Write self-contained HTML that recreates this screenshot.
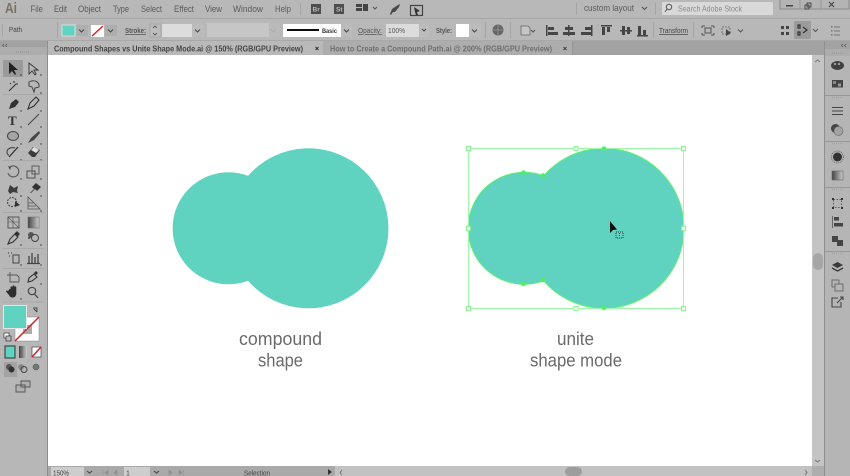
<!DOCTYPE html>
<html><head><meta charset="utf-8"><style>
html,body{margin:0;padding:0;width:850px;height:476px;overflow:hidden;background:#b8b8b8}
svg{display:block;position:absolute;left:0;top:0}
text{font-family:"Liberation Sans",sans-serif}
</style></head><body>
<svg width="850" height="476" viewBox="0 0 850 476" xmlns="http://www.w3.org/2000/svg">
<defs><filter id="b" x="-2%" y="-2%" width="104%" height="104%"><feGaussianBlur stdDeviation="0.35"/></filter>
<linearGradient id="g" x1="0" x2="1"><stop offset="0" stop-color="#444"/><stop offset="1" stop-color="#ccc"/></linearGradient></defs>
<rect width="850" height="476" fill="#b8b8b8"/>
<g filter="url(#b)">
<!-- menu bar -->
<rect x="0" y="18" width="850" height="1" fill="#a6a6a6"/>
<text x="5" y="13" font-size="15" textLength="12" lengthAdjust="spacingAndGlyphs" font-weight="bold" fill="#7c6f64">Ai</text>
<g font-size="9" fill="#5a5a5a">
<text x="30.500" y="12" textLength="12.500" lengthAdjust="spacingAndGlyphs">File</text><text x="54" y="12" textLength="13" lengthAdjust="spacingAndGlyphs">Edit</text><text x="78" y="12" textLength="23" lengthAdjust="spacingAndGlyphs">Object</text><text x="113" y="12" textLength="16" lengthAdjust="spacingAndGlyphs">Type</text><text x="141" y="12" textLength="21" lengthAdjust="spacingAndGlyphs">Select</text><text x="174" y="12" textLength="20" lengthAdjust="spacingAndGlyphs">Effect</text><text x="205" y="12" textLength="17" lengthAdjust="spacingAndGlyphs">View</text><text x="233" y="12" textLength="30" lengthAdjust="spacingAndGlyphs">Window</text><text x="275" y="12" textLength="16" lengthAdjust="spacingAndGlyphs">Help</text>
</g>
<rect x="300" y="3" width="1" height="12" fill="#a5a5a5"/>
<rect x="311" y="4" width="10" height="10" fill="#4d4d4d"/><text x="312.500" y="11.500" font-size="6.500" fill="#bbb" font-weight="bold">Br</text>
<rect x="334" y="4" width="10" height="10" fill="#4d4d4d"/><text x="336" y="11.500" font-size="6.500" fill="#bbb" font-weight="bold">St</text>
<path d="M356 4h6v3h-6zM356 8h6v3h-6zM363 4h5v7h-5z" fill="#444"/><path d="M373 7l2 2 2-2" stroke="#555" fill="none"/>
<path d="M390 14l2-5 6-4 2-1-1 3-4 5-2 0-2 3z" fill="#4a4a4a"/>
<path d="M410.500 5.500h12v10h-12z" fill="none" stroke="#444" stroke-width="1.200"/><path d="M414 7l6 4-3 1 1 3-2 0-1-3z" fill="#333"/>
<rect x="576" y="3" width="1" height="12" fill="#a5a5a5"/>
<text x="584" y="11" font-size="9" fill="#5c5c5c" textLength="50" lengthAdjust="spacingAndGlyphs">custom layout</text><path d="M642 7l2.500 2.500 2.500-2.500" stroke="#555" fill="none" stroke-width="1.100"/>
<rect x="655" y="3" width="1" height="12" fill="#a5a5a5"/>
<rect x="662" y="2" width="111" height="13" rx="1" fill="#d9d9d9"/>
<circle cx="669" cy="7" r="2.700" fill="none" stroke="#555" stroke-width="1"/><path d="M667 9l-2 3" stroke="#555" stroke-width="1"/>
<text x="678" y="11.500" font-size="8" fill="#8a8a8a" textLength="64" lengthAdjust="spacingAndGlyphs">Search Adobe Stock</text>
<path d="M780 0v9h69V0" fill="#b4b4b4" stroke="#7d7d7d" stroke-width=".8"/><path d="M800 0v9M821 0v9" stroke="#8a8a8a" stroke-width=".7"/>
<rect x="786" y="5" width="7" height="1.500" fill="#444"/><path d="M807 3h4v4h-4zM805 5h4v4h-4z" fill="none" stroke="#444" stroke-width=".9"/><path d="M829 2l5 5M834 2l-5 5" stroke="#444" stroke-width="1.200"/>

<!-- control bar -->
<rect x="0" y="40" width="850" height="1" fill="#a8a8a8"/>
<rect x="2" y="24" width="1" height="12" fill="#a5a5a5"/>
<text x="9" y="32" font-size="7.500" fill="#444" textLength="13" lengthAdjust="spacingAndGlyphs">Path</text>
<rect x="57" y="22" width="1" height="16" fill="#a5a5a5"/>
<rect x="62" y="25" width="13" height="11" fill="#5ed3bf" stroke="#eee" stroke-width=".7"/>
<rect x="76" y="25" width="12" height="11" fill="#aeaeae"/><path d="M79 29.500l2.500 2.500 2.500-2.500" stroke="#444" fill="none"/>
<rect x="91" y="25" width="13" height="12" fill="#fff"/><path d="M92 36l11-10" stroke="#d22" stroke-width="1.500"/>
<rect x="105" y="25" width="12" height="11" fill="#aeaeae"/><path d="M108 29.500l2.500 2.500 2.500-2.500" stroke="#444" fill="none"/>
<text x="125" y="33" font-size="7.500" font-weight="bold" fill="#555" text-decoration="underline" textLength="21" lengthAdjust="spacingAndGlyphs">Stroke:</text>
<rect x="150" y="24" width="11" height="13" fill="#bdbdbd" stroke="#9c9c9c" stroke-width=".6"/><path d="M153 28l2-2 2 2M153 33l2 2 2-2" stroke="#444" fill="none" stroke-width=".8"/>
<rect x="162" y="24" width="30" height="13" fill="#dcdcdc"/><rect x="192" y="24" width="12" height="13" fill="#bcbcbc"/><path d="M195 29.500l2.500 2.500 2.500-2.500" stroke="#444" fill="none"/>
<rect x="207" y="23" width="62" height="14" fill="#c6c6c6"/><rect x="269" y="23" width="11" height="14" fill="#bababa"/><path d="M271 29.500l2.500 2.500 2.500-2.500" stroke="#aaa" fill="none"/>
<rect x="283" y="24" width="58" height="13" fill="#fff"/><rect x="287" y="29" width="32" height="2" fill="#111"/>
<text x="322" y="33" font-size="6.500" fill="#333" font-weight="bold" textLength="15" lengthAdjust="spacingAndGlyphs">Basic</text>
<rect x="341" y="24" width="11" height="13" fill="#bcbcbc"/><path d="M344 29.500l2.500 2.500 2.500-2.500" stroke="#444" fill="none"/>
<text x="358" y="33" font-size="7.500" fill="#555" text-decoration="underline" textLength="24" lengthAdjust="spacingAndGlyphs">Opacity:</text>
<rect x="386" y="24" width="33" height="13" fill="#dcdcdc"/><text x="388" y="33" font-size="7" fill="#555" textLength="17" lengthAdjust="spacingAndGlyphs">100%</text>
<rect x="420" y="24" width="9" height="13" fill="#bcbcbc"/><path d="M422 29l2 2 2-2" stroke="#444" fill="none"/>
<text x="436" y="33" font-size="7.500" font-weight="bold" fill="#555" textLength="16" lengthAdjust="spacingAndGlyphs">Style:</text>
<rect x="456" y="24" width="13" height="13" fill="#fff"/><rect x="469" y="24" width="12" height="13" fill="#bcbcbc"/><path d="M472 29.500l2.500 2.500 2.500-2.500" stroke="#444" fill="none"/>
<rect x="485" y="22" width="1" height="16" fill="#a5a5a5"/>
<circle cx="498" cy="30" r="5.500" fill="#666"/><path d="M493 30h10M498 25v10" stroke="#999" stroke-width=".7"/>
<rect x="510" y="22" width="1" height="16" fill="#a5a5a5"/>
<path d="M521 26h7l2 2v7h-9z" fill="#c6c6c6" stroke="#666" stroke-width=".8"/><path d="M531 30l2 2 2-2" stroke="#555" fill="none"/>
<g fill="#454545">
<path d="M546 25h1.500v11H546zM548 27h6v3h-6zM548 32h10v3h-10z"/>
<path d="M568 25h1.500v11H568zM565 27h8v3h-8zM563 32h12v3h-12z"/>
<path d="M591 25h1.500v11H591zM585 27h6v3h-6zM581 32h10v3h-10z"/>
<path d="M601 25h11v1.500h-11zM602 27h3v8h-3zM607 27h3v5h-3z"/>
<path d="M620 30h12v1.500h-12zM622 26h3v9h-3zM627 27h3v7h-3z"/>
<path d="M637 35h11v1.500h-11zM638 26h3v9h-3zM643 30h3v5h-3z"/>
</g>
<rect x="653" y="22" width="1" height="16" fill="#a5a5a5"/>
<text x="659" y="33" font-size="7.200" fill="#444" text-decoration="underline" textLength="29" lengthAdjust="spacingAndGlyphs">Transform</text>
<rect x="693" y="22" width="1" height="16" fill="#a5a5a5"/>
<path d="M702 26h3M711 26h3M702 35h3M711 35h3M705 28h6v5h-6zM702 26v2M714 26v2M702 33v2M714 33v2" stroke="#555" fill="none"/>
<path d="M722 27h8v7h-8z" fill="none" stroke="#666" stroke-width=".8" stroke-dasharray="2 1"/><path d="M726 29l5 4-5 3z" fill="#444"/><path d="M738 29.500l2.500 2.500 2.500-2.500" stroke="#555" fill="none"/>
<path d="M781 26h3v3h-3zM786 26h3v3h-3zM781 32h3v3h-3zM786 32h3v3h-3z" fill="#444"/>
<rect x="794" y="21" width="17" height="18" rx="1" fill="#9c9c9c"/>
<path d="M798 25h2v3h-2zM798 32h2v3h-2zM803 27l4 3-4 3" fill="none" stroke="#333" stroke-width="1.200"/><path d="M813 29l2.500 2.500 2.500-2.500" stroke="#555" fill="none"/>
<path d="M831 26h1.500v1.500H831zM831 30h1.500v1.500H831zM831 34h1.500v1.500H831zM834 26.500h6v1h-6zM834 30.500h6v1h-6zM834 34.500h6v1h-6z" fill="#777"/>

<!-- tab row -->
<rect x="0" y="41" width="850" height="14" fill="#a2a2a2"/>
<rect x="48" y="41" width="275" height="14" fill="#b9b9b9"/>
<rect x="323" y="41" width="249" height="14" fill="#adadad"/>
<rect x="572" y="41" width="1" height="14" fill="#969696"/>
<text x="54" y="51.500" font-size="8" font-weight="bold" fill="#444" textLength="249" lengthAdjust="spacingAndGlyphs">Compound Shapes vs Unite Shape Mode.ai @ 150% (RGB/GPU Preview)</text>
<path d="M315.500 47l3 3M318.500 47l-3 3" stroke="#333" stroke-width="1"/>
<text x="330" y="51.500" font-size="8" font-weight="bold" fill="#6e6e6e" textLength="222" lengthAdjust="spacingAndGlyphs">How to Create a Compound Path.ai @ 200% (RGB/GPU Preview)</text>
<path d="M563.500 47l3 3M566.500 47l-3 3" stroke="#444" stroke-width="1"/>
<path d="M4 44l-1.500 1.500L4 47M7 44l-1.500 1.500L7 47" stroke="#555" fill="none" stroke-width=".7"/>
<path d="M843 44l-1.500 1.500L843 47M846 44l-1.500 1.500L846 47" stroke="#555" fill="none" stroke-width=".7"/>

<!-- left toolbar -->
<rect x="0" y="47" width="47" height="429" fill="#b7b7b7"/>
<rect x="0" y="47" width="47" height="8" fill="#adadad"/>
<path d="M16 52h14" stroke="#9a9a9a" stroke-width="1.500" stroke-dasharray="1 1"/>
<rect x="47" y="41" width="1" height="435" fill="#8f8f8f"/>
<rect x="3" y="60" width="20" height="17" rx="1" fill="#9a9a9a"/>
<path d="M9 62l0 12 3-3 3 4 1-1-2-4 4 0z" fill="#222"/>
<path d="M29 63l0 11 3-3 3 4 1-1-2-4 4 0z" fill="none" stroke="#333" stroke-width=".9"/>
<path d="M9 91l7-7M14 81v2M18 84h-2M10 83l1 1" stroke="#333" stroke-width="1.100"/>
<path d="M29 82c5-3 11 0 10 5l-4 1-1 4-2-5-3-1z" fill="none" stroke="#444" stroke-width="1"/>
<path d="M9 109l2-6 5-4 3 3-4 5z" fill="#333"/>
<path d="M28 109l2-6 6-6 3 3-5 6z" fill="none" stroke="#333" stroke-width="1.100"/>
<text x="8" y="125" font-size="13" font-weight="bold" fill="#333" style="font-family:'Liberation Serif',serif">T</text>
<path d="M28 125l11-11" stroke="#444" stroke-width="1"/>
<ellipse cx="13" cy="136" rx="5.500" ry="4.500" fill="#a6a6a6" stroke="#444" stroke-width="1"/>
<path d="M28 143l3-5 8-7 1 2-6 7z" fill="#444"/>
<path d="M15 148c-3-1-8 0-8 4 0 2 1 3 2 3" fill="none" stroke="#444" stroke-width="1.100"/><path d="M9 157l9-10" stroke="#333" stroke-width="1.300"/>
<path d="M28 153l5-6 7 3-5 7-3 0z" fill="#3c3c3c"/><path d="M31 150l3-3 5 3-3 3z" fill="#ddd"/>
<path d="M10 167a5.500 5.500 0 1 1-2 6" fill="none" stroke="#555" stroke-width="1.100"/><path d="M8 166l3 1-1 3z" fill="#444"/>
<rect x="27" y="171" width="8" height="7" fill="none" stroke="#444" stroke-width=".9"/><rect x="32" y="166" width="7" height="8" fill="none" stroke="#555" stroke-width=".9"/>
<path d="M8 191l2-6 4 3 4-2-1 5 1 2-5-1-3 2z" fill="#3d3d3d"/>
<path d="M30 193l4-4-2-2 4-4 5 4-4 4-2-2-4 4z" fill="#333"/>
<circle cx="12" cy="202" r="4.500" fill="none" stroke="#444" stroke-dasharray="2 1"/><path d="M15 201l5 4-5 2z" fill="#333"/>
<path d="M28 197v12h12zM28 203h5M28 206h8" fill="none" stroke="#555" stroke-width=".8"/>
<rect x="8" y="217" width="11" height="11" fill="#b7b7b7" stroke="#444" stroke-width=".8"/><path d="M8 222h11M13 217v11M8 217l11 11" stroke="#555" stroke-width=".6"/>
<rect x="28" y="217" width="11" height="11" fill="url(#g)" stroke="#666" stroke-width=".5"/>
<path d="M8 244l2-5 5-5 3 3-5 5z" fill="none" stroke="#333" stroke-width="1.100"/><path d="M14 234l3-3 3 3-3 3z" fill="#333"/>
<circle cx="31" cy="235" r="3" fill="#555"/><circle cx="35" cy="238" r="3.500" fill="#b7b7b7" stroke="#444"/><circle cx="29" cy="238" r="1" fill="#444"/>
<rect x="13" y="255" width="6" height="8" fill="none" stroke="#444" stroke-width="1"/><path d="M8 253h1M11 253h1M9 256h1" stroke="#444" stroke-width="1.200"/>
<path d="M29 263v-7M32 263v-10M35 263v-6M38 263v-9M27 263.500h13" stroke="#444" stroke-width="1.300"/>
<path d="M7 275h4M10 272v10h9" fill="none" stroke="#555" stroke-width=".9"/><path d="M11 275h6l2 2v5" fill="none" stroke="#555" stroke-width=".9"/>
<path d="M28 282l1-4 5-4 3 3-5 4z" fill="none" stroke="#333" stroke-width="1.100"/><path d="M34 273l2-2 2 2-2 2z" fill="#333"/>
<path d="M9 290c0-1.500 1.500-1.500 1.500 0v1l0-3.500c0-1.500 2-1.500 2 0v2-3c0-1.500 2-1.500 2 0v3l0-2c0-1.500 1.800-1.500 1.800 0v6c0 2.500-1.800 4-3.500 4s-3-.5-3.800-2.500l-3-3.500c0-1 1-1.500 2-.5z" fill="#2e2e2e"/>
<circle cx="32" cy="291" r="3.700" fill="none" stroke="#444" stroke-width="1.200"/><path d="M34.500 294l3.500 4" stroke="#444" stroke-width="1.300"/>
<g fill="#333"><circle cx="21" cy="75" r=".7"/><circle cx="41" cy="75" r=".7"/><circle cx="41" cy="93" r=".7"/><circle cx="21" cy="111" r=".7"/><circle cx="41" cy="111" r=".7"/><circle cx="21" cy="127" r=".7"/><circle cx="41" cy="127" r=".7"/><circle cx="21" cy="144" r=".7"/><circle cx="41" cy="144" r=".7"/><circle cx="21" cy="160" r=".7"/><circle cx="41" cy="160" r=".7"/><circle cx="21" cy="179" r=".7"/><circle cx="41" cy="179" r=".7"/><circle cx="21" cy="196" r=".7"/><circle cx="41" cy="196" r=".7"/><circle cx="21" cy="211" r=".7"/><circle cx="41" cy="211" r=".7"/><circle cx="21" cy="245" r=".7"/><circle cx="41" cy="245" r=".7"/><circle cx="21" cy="265" r=".7"/><circle cx="41" cy="265" r=".7"/><circle cx="41" cy="284" r=".7"/><circle cx="21" cy="299" r=".7"/></g>
<path d="M3 94.500h41M3 160.500h41M3 212.500h41M3 248.500h41M3 268.500h41M3 302h41" stroke="#a5a5a5" stroke-width=".8"/>
<!-- fill stroke -->
<rect x="15" y="317" width="24" height="24" fill="#fff" stroke="#888" stroke-width=".5"/>
<rect x="23" y="325" width="9" height="9" fill="#aaa"/>
<path d="M15 341l24-24" stroke="#d4222a" stroke-width="1.500"/>
<rect x="3.500" y="305.500" width="23" height="23" fill="#5ed3bf" stroke="#e6e6e6" stroke-width="1"/>
<path d="M33 308h4v4M37 312l-3-3" stroke="#444" fill="none" stroke-width=".9"/>
<rect x="4" y="333" width="5" height="5" fill="#fff" stroke="#333" stroke-width=".7"/><rect x="6" y="336" width="5" height="5" fill="#bbb" stroke="#333" stroke-width=".7"/>
<rect x="5" y="346" width="10" height="12" fill="#5ed3bf" stroke="#333" stroke-width="1"/>
<rect x="19" y="346" width="8" height="12" fill="url(#g)"/>
<rect x="32" y="347" width="9" height="10" fill="#fff" stroke="#444" stroke-width=".7"/><path d="M32 357l9-10" stroke="#d4222a" stroke-width="1.500"/>
<rect x="4" y="362" width="13" height="15" fill="#a3a3a3"/>
<circle cx="9" cy="367" r="3" fill="#555"/><circle cx="11.500" cy="369.500" r="3" fill="#333"/>
<circle cx="21" cy="367" r="3" fill="#888"/><circle cx="24" cy="369.500" r="3" fill="none" stroke="#444"/>
<circle cx="36" cy="367" r="3" fill="#777" stroke="#444" stroke-width=".5"/>
<path d="M21 381h9v6h-9zM16 385h9v7h-9z" fill="#b0b0b0" stroke="#555" stroke-width=".9"/>

<!-- canvas -->
<rect x="48" y="55" width="764" height="411" fill="#fff"/>
<path d="M248.100 175.800A80 80 0 1 1 248.100 280.800A56 56 0 1 1 248.100 175.800Z" fill="#5fd3c0"/>
<path d="M543.600 175.800A80 80 0 1 1 543.600 280.800A56 56 0 1 1 543.600 175.800Z" fill="#5fd3c0" stroke="#5cf06e" stroke-width="1"/>
<rect x="468.500" y="148.500" width="215" height="160" fill="none" stroke="#9cf7a6" stroke-width="1"/>
<g fill="#fff" stroke="#8df098" stroke-width="1">
<rect x="466.500" y="146.500" width="4" height="4"/><rect x="574" y="146.500" width="4" height="4"/><rect x="681.500" y="146.500" width="4" height="4"/>
<rect x="466.500" y="226.500" width="4" height="4"/><rect x="681.500" y="226.500" width="4" height="4"/>
<rect x="466.500" y="306.500" width="4" height="4"/><rect x="574" y="306.500" width="4" height="4"/><rect x="681.500" y="306.500" width="4" height="4"/>
</g>
<g fill="#4cf05e">
<circle cx="604" cy="148.500" r="2.200"/><circle cx="604" cy="308" r="2.200"/><circle cx="523.500" cy="172.500" r="2.200"/><circle cx="523.500" cy="284" r="2.200"/><circle cx="543" cy="175.500" r="2.200"/><circle cx="543" cy="280" r="2.200"/>
</g>
<path d="M610 221l7 8.500-4 .5-3 3z" fill="#111"/>
<rect x="616" y="232" width="7" height="6" fill="none" stroke="#333" stroke-width="1" stroke-dasharray="1 1"/>
<path d="M619.500 233v4" stroke="#444" stroke-width="1" stroke-dasharray="1 1"/>
<g font-size="18" fill="#6b6b6b">
<text x="239" y="345" textLength="83" lengthAdjust="spacingAndGlyphs">compound</text><text x="258" y="366.500" textLength="45" lengthAdjust="spacingAndGlyphs">shape</text>
<text x="557" y="345" textLength="37" lengthAdjust="spacingAndGlyphs">unite</text><text x="530" y="366.500" textLength="92" lengthAdjust="spacingAndGlyphs">shape mode</text>
</g>

<!-- vertical scrollbar -->
<rect x="812" y="55" width="12" height="411" fill="#c4c4c4"/>
<path d="M815 62l2.500-2 2.500 2" stroke="#777" fill="none" stroke-width="1"/>
<rect x="813" y="253" width="10" height="17" rx="5" fill="#a6a6a6"/>
<path d="M815 460l2.500 2 2.500-2" stroke="#777" fill="none" stroke-width="1"/>
<rect x="824" y="41" width="1" height="435" fill="#8f8f8f"/>
<!-- right panel -->
<rect x="825" y="55" width="25" height="421" fill="#b5b5b5"/>
<rect x="825" y="49" width="25" height="7" fill="#adadad"/>
<path d="M832 53h12" stroke="#9d9d9d" stroke-width="1.500" stroke-dasharray="1 1"/>
<path d="M825 95.500h25M825 141.500h25M825 187.500h25M825 251.500h25" stroke="#999" stroke-width="1"/>
<path d="M832 97.500h12M832 143.500h12M832 189.500h12M832 253.500h12" stroke="#a2a2a2" stroke-width="1.200" stroke-dasharray="1 1"/>
<ellipse cx="837.500" cy="65.500" rx="6.500" ry="4.500" fill="#3f3f3f"/><circle cx="835" cy="64" r="1" fill="#bbb"/><circle cx="839" cy="64" r="1" fill="#bbb"/>
<rect x="832" y="80" width="11" height="7.500" fill="#444"/><rect x="833" y="81" width="3" height="3" fill="#888"/><rect x="838" y="83.500" width="3" height="3" fill="#999"/>
<path d="M832 107.500h11M832 111h11M832 114.500h11" stroke="#444" stroke-width="1.100"/>
<circle cx="835.500" cy="128.500" r="4.500" fill="#444"/><circle cx="838.500" cy="131" r="4.500" fill="#a3a3a3" stroke="#666" stroke-width=".6"/>
<circle cx="837.500" cy="157" r="4.500" fill="#333"/><circle cx="837.500" cy="157" r="6" fill="none" stroke="#555" stroke-width=".8" stroke-dasharray="1 1"/>
<rect x="832" y="171" width="11" height="9" fill="url(#g)" stroke="#666" stroke-width=".6"/>
<rect x="833.500" y="199.500" width="8" height="8" fill="none" stroke="#444" stroke-width=".8" stroke-dasharray="1.500 1.500"/><path d="M832 198h2v2h-2zM841 198h2v2h-2zM832 207h2v2h-2zM841 207h2v2h-2z" fill="#333"/>
<path d="M832.500 216v12" stroke="#666"/><rect x="834" y="217" width="5" height="3.500" fill="#444"/><rect x="834" y="223" width="9" height="3.500" fill="#444"/>
<rect x="832" y="236" width="6" height="6" fill="#444"/><rect x="837" y="240" width="6" height="6" fill="#444"/>
<path d="M837.500 262l5.500 3-5.500 3-5.500-3z" fill="#3a3a3a"/><path d="M832 268l5.500 3 5.500-3" fill="none" stroke="#3a3a3a" stroke-width="1.300"/>
<rect x="832" y="280" width="7" height="7" fill="none" stroke="#666" stroke-width=".9"/><rect x="835" y="284" width="8" height="7" fill="#b5b5b5" stroke="#666" stroke-width=".9"/>
<path d="M838 298h-6v9h9v-5" fill="none" stroke="#444" stroke-width="1.100"/><path d="M837 303l6-6M840 297h3v3" fill="none" stroke="#444" stroke-width="1.100"/>

<!-- status bar -->
<rect x="48" y="466" width="764" height="10" fill="#a9a9a9"/>
<rect x="335" y="466" width="477" height="10" fill="#c2c2c2"/>
<rect x="812" y="466" width="12" height="10" fill="#aeaeae"/>
<rect x="51" y="467" width="33" height="9" fill="#cdcdcd"/>
<text x="53" y="475.500" font-size="7" fill="#444" textLength="16" lengthAdjust="spacingAndGlyphs">150%</text>
<path d="M87 471l2.500 2 2.500-2" stroke="#444" fill="none" stroke-width="1.100"/>
<path d="M103 470v5M108 470l-3 2.500 3 2.500zM117 470l-3 2.500 3 2.500z" fill="#909090" stroke="#909090" stroke-width=".6"/>
<rect x="124" y="467" width="26" height="9" fill="#cdcdcd"/>
<text x="126" y="475.500" font-size="7" fill="#444">1</text>
<path d="M154 471l2.500 2 2.500-2" stroke="#444" fill="none" stroke-width="1.100"/>
<path d="M169 470l3 2.500-3 2.500zM179 470l3 2.500-3 2.500zM183.500 470v5" fill="#909090" stroke="#909090" stroke-width=".6"/>
<text x="244" y="475.500" font-size="7" fill="#444" textLength="26" lengthAdjust="spacingAndGlyphs">Selection</text>
<path d="M328 469l4 3-4 3z" fill="#333"/>
<path d="M342 470l-2 2.500 2 2.500" stroke="#777" fill="none"/>
<rect x="565" y="467" width="17" height="9" rx="4.500" fill="#9d9d9d"/>
<path d="M805 470l2 2.500-2 2.500" stroke="#777" fill="none"/>
</g>
</svg>
</body></html>
